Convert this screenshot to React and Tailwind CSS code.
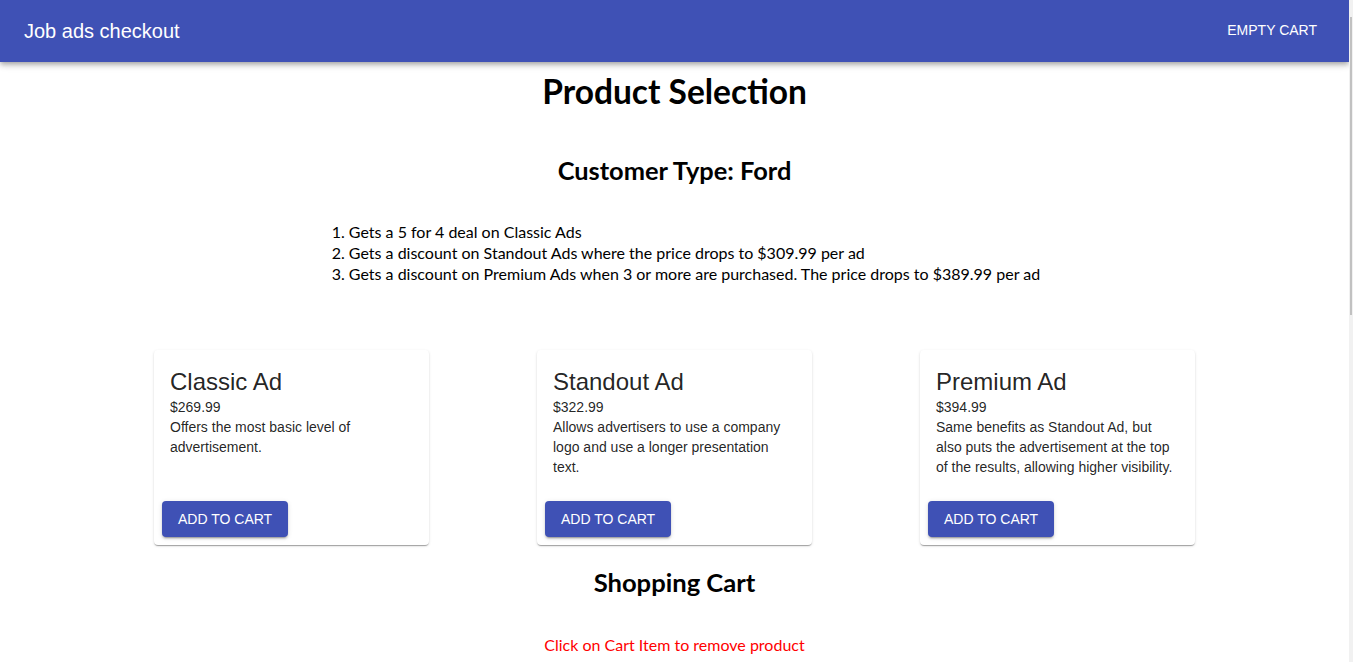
import React from 'react'

const products = [
  {
    name: 'Classic Ad',
    price: '$269.99',
    description: 'Offers the most basic level of advertisement.',
  },
  {
    name: 'Standout Ad',
    price: '$322.99',
    description: 'Allows advertisers to use a company logo and use a longer presentation text.',
  },
  {
    name: 'Premium Ad',
    price: '$394.99',
    description:
      'Same benefits as Standout Ad, but also puts the advertisement at the top of the results, allowing higher visibility.',
  },
]

const deals = [
  'Gets a 5 for 4 deal on Classic Ads',
  'Gets a discount on Standout Ads where the price drops to $309.99 per ad',
  'Gets a discount on Premium Ads when 3 or more are purchased. The price drops to $389.99 per ad',
]

function ProductCard({ product }) {
  return (
    <div className="flex w-[275px] flex-col rounded bg-white shadow-[0px_2px_1px_-1px_rgba(0,0,0,0.2),0px_1px_1px_0px_rgba(0,0,0,0.14),0px_1px_3px_0px_rgba(0,0,0,0.12)]">
      <div className="flex-1 p-4 font-['Liberation_Sans',Arial,sans-serif] text-[rgba(0,0,0,0.87)]">
        <h3 className="text-[24px] leading-[31px]">{product.name}</h3>
        <p className="text-[14px] leading-[20px]">{product.price}</p>
        <p className="text-[14px] leading-[20px]">{product.description}</p>
      </div>
      <div className="p-2">
        <button
          type="button"
          className="h-9 rounded bg-[#3f51b5] px-4 font-['Liberation_Sans',Arial,sans-serif] text-[14px] uppercase text-white shadow-[0px_3px_1px_-2px_rgba(0,0,0,0.2),0px_2px_2px_0px_rgba(0,0,0,0.14),0px_1px_5px_0px_rgba(0,0,0,0.12)]"
        >
          Add to cart
        </button>
      </div>
    </div>
  )
}

export default function App() {
  return (
    <div className="flex h-[662px] overflow-hidden bg-white">
      <div className="w-[1349px] shrink-0">
        <header className="flex h-[62px] items-center justify-between bg-[#3f51b5] pl-6 pr-8 text-white shadow-[0px_2px_4px_-1px_rgba(0,0,0,0.2),0px_4px_5px_0px_rgba(0,0,0,0.14),0px_1px_10px_0px_rgba(0,0,0,0.12)]">
          <span className="-mt-[1px] font-['Liberation_Sans',Arial,sans-serif] text-[20px]">Job ads checkout</span>
          <button type="button" className="-mt-[2px] font-['Liberation_Sans',Arial,sans-serif] text-[14px] uppercase">
            Empty cart
          </button>
        </header>

        <main className="font-['Lato','Noto_Sans',sans-serif] text-black">
          <h1 className="mt-[9px] text-center text-[33.5px] font-bold leading-[40px]">Product Selection</h1>
          <h2 className="mt-[43px] text-center text-[25.4px] font-bold leading-[32px]">Customer Type: Ford</h2>

          <div className="mt-[35px] flex justify-center">
            <ol className="list-decimal pl-10 text-[16px] leading-[21px]">
              {deals.map((deal) => (
                <li key={deal}>{deal}</li>
              ))}
            </ol>
          </div>

          <div className="mx-auto mt-[66px] grid w-[1149px] grid-cols-3 justify-items-center">
            {products.map((product) => (
              <ProductCard key={product.name} product={product} />
            ))}
          </div>

          <h2 className="mt-[21px] text-center text-[25.6px] font-bold leading-[32px]">Shopping Cart</h2>
          <p className="mt-[36px] text-center text-[16px] leading-[22px] text-[#ff0000]">
            Click on Cart Item to remove product
          </p>
        </main>
      </div>

      {/* scrollbar strip */}
      <div className="flex w-[4px] flex-col bg-[#f1f1f1] pt-[17px]">
        <div className="mx-auto h-[298px] w-[2px] bg-[#c1c1c1]" />
      </div>
    </div>
  )
}
